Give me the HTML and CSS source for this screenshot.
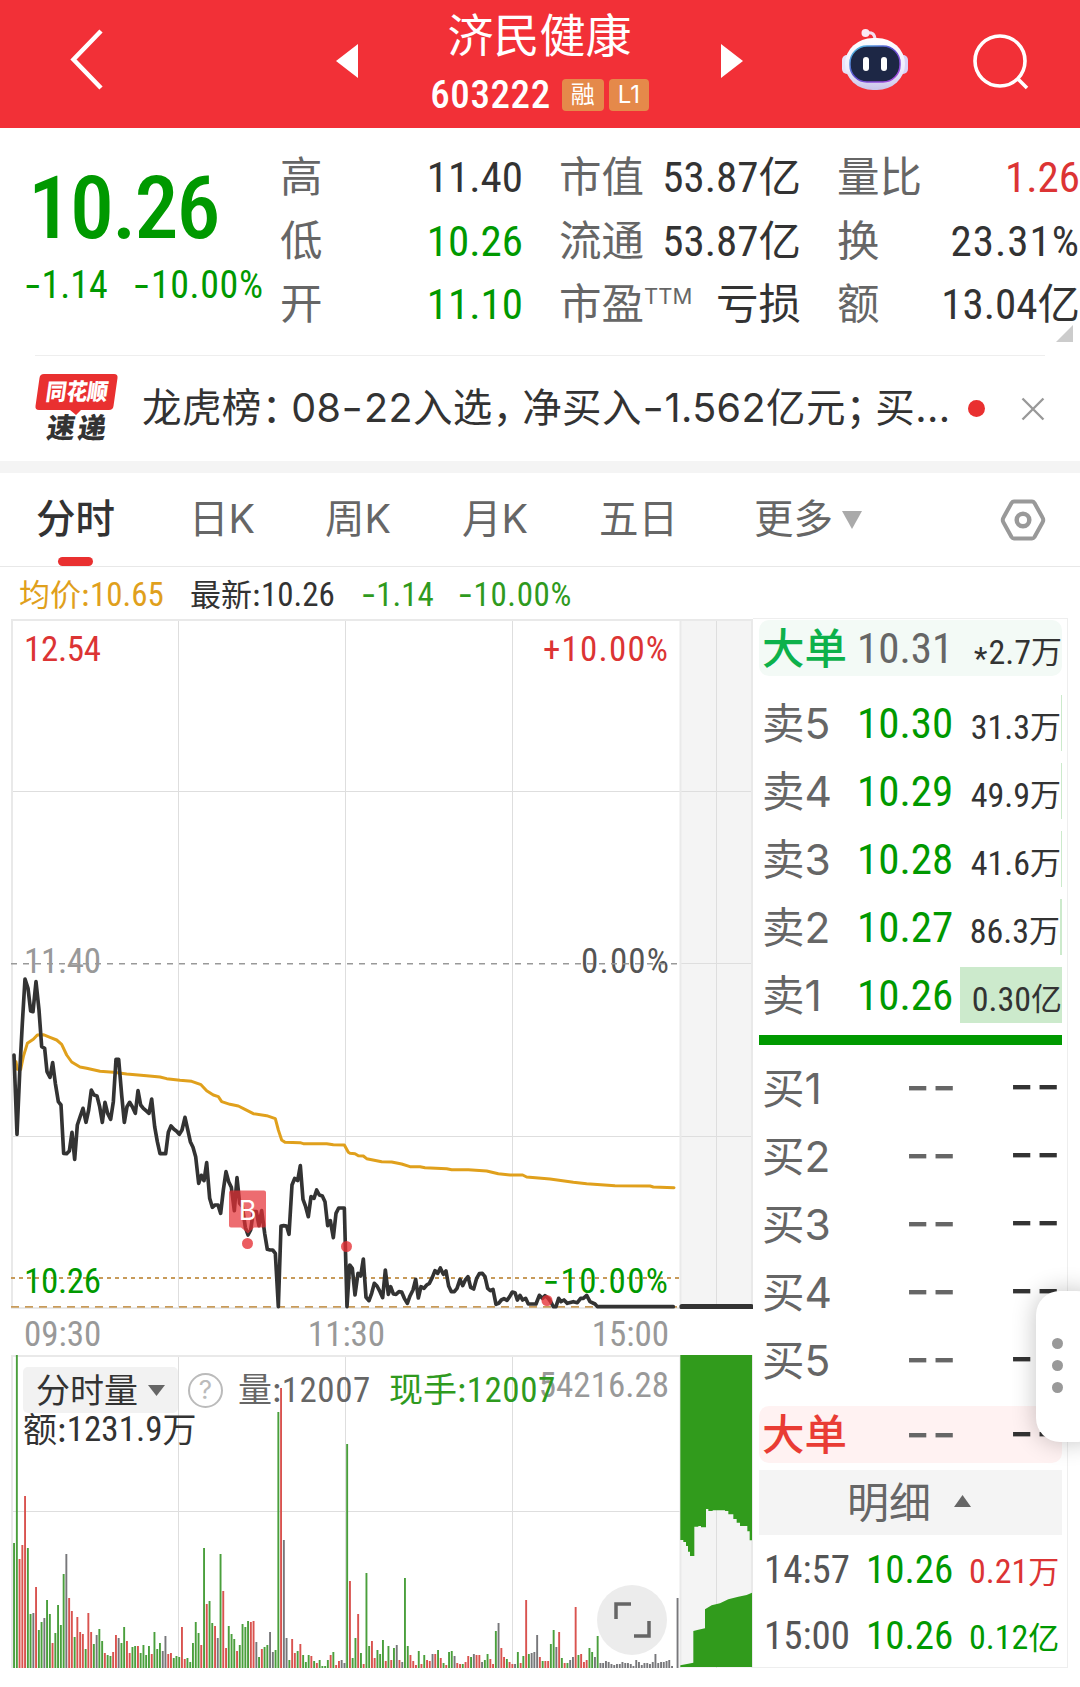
FILE: index.html
```html
<!DOCTYPE html>
<html lang="zh-CN">
<head>
    <meta charset="UTF-8">
    <title>济民健康 603222</title>
    <meta name="viewport" content="width=1080">
    <link rel="stylesheet" href="styles.css">
</head>
<body>
<div class="wrap">
    <header class="header">
        <svg class="back" width="44" height="64" viewBox="0 0 44 64"><path d="M36 3 8.500 31.500 36 60" fill="none" stroke="#fff" stroke-width="4.500"/></svg>
        <i class="prev"></i>
        <div class="title">
            <h1>济民健康</h1>
            <p><b>603222</b><em>融</em><em class="l1">L1</em></p>
        </div>
        <i class="next"></i>
        <svg class="robot" width="66" height="64" viewBox="0 0 66 64">
            <defs>
                <linearGradient id="shell" x1="0" y1="0" x2="0" y2="1"><stop offset="0" stop-color="#fff"/><stop offset=".6" stop-color="#eeecfb"/><stop offset="1" stop-color="#c9c4ea"/></linearGradient>
                <linearGradient id="ring" x1="0" y1="0" x2="1" y2="1"><stop offset="0" stop-color="#4fd0e6"/><stop offset=".45" stop-color="#5b4fd0"/><stop offset="1" stop-color="#b14be0"/></linearGradient>
            </defs>
            <path d="M24 5q9-2 9 7" fill="none" stroke="#f3dff0" stroke-width="3"/>
            <circle cx="23.500" cy="5" r="4" fill="#fbe9f4"/>
            <rect y="27" width="10" height="19" rx="5" fill="#e6e2fa"/>
            <rect x="56" y="27" width="10" height="19" rx="5" fill="#d9d2f7"/>
            <rect x="3" y="10" width="60" height="52" rx="28" fill="url(#shell)"/>
            <rect x="8" y="18" width="50" height="36" rx="17" fill="#1d2745" stroke="url(#ring)" stroke-width="1.500"/>
            <rect x="21" y="29" width="6" height="14" rx="3" fill="#fff"/>
            <rect x="39" y="29" width="6" height="14" rx="3" fill="#fff"/>
        </svg>
        <svg class="search" width="60" height="60" viewBox="0 0 60 60" fill="none" stroke="#fff" stroke-width="3.600"><circle cx="28" cy="29" r="25"/><path d="M45.500 46.500 55 56"/></svg>
    </header>

    <section class="quote">
        <div class="price">
            <b class="big">10.26</b>
            <p><b><i>-</i>1.14</b><b class="rate"><i>-</i>10.00%</b></p>
        </div>
        <ul class="c1">
            <li>高<span><b>11.40</b></span></li>
            <li>低<span class="green"><b>10.26</b></span></li>
            <li>开<span class="green"><b>11.10</b></span></li>
        </ul>
        <ul class="c2">
            <li>市值<span><b>53.87</b>亿</span></li>
            <li>流通<span><b>53.87</b>亿</span></li>
            <li>市盈<sup>TTM</sup><span>亏损</span></li>
        </ul>
        <ul class="c3">
            <li>量比<span class="red"><b>1.26</b></span></li>
            <li>换<span><b class="rate">23.31%</b></span></li>
            <li>额<span><b>13.04</b>亿</span></li>
        </ul>
        <i class="corner"></i>
    </section>

    <section class="news">
        <svg class="logo" width="84" height="72" viewBox="0 0 84 72">
            <path d="M9 2h70q4 0 3.500 4l-4 28q-.5 4-4.500 4H46l-5 5-6-5H4q-4 0-3.500-4L4.500 6Q5 2 9 2z" fill="#e93030"/>
            <g font-family="Noto Sans CJK SC" font-weight="900" transform="skewX(-8)">
                <text x="14" y="28.500" font-size="23" fill="#fff" textLength="62" lengthAdjust="spacingAndGlyphs">同花顺</text>
                <text x="20" y="66.500" font-size="28" fill="#333" textLength="59">速递</text>
            </g>
        </svg>
        <p>龙虎榜<s>：</s>08<i>-</i>22入选<s>，</s>净买入<i>-</i>1.562亿元<s>；</s>买...</p>
        <em class="dot"></em>
        <svg class="close" width="24" height="24" viewBox="0 0 24 24"><path d="M1.500 1.500l21 21M22.500 1.500l-21 21" stroke="#999" stroke-width="2.400"/></svg>
    </section>

    <nav class="tabs">
        <a class="on">分时</a><a>日K</a><a>周K</a><a>月K</a><a>五日</a><a class="more">更多</a>
        <svg width="46" height="46" viewBox="0 0 46 46" fill="none" stroke="#999"><path d="M14 4.500h18q1.500 0 2.500 1.500l8 14.500q1.500 2.500 0 5l-8 14.500q-1 1.500-2.500 1.500h-18q-1.500 0-2.500-1.500l-8-14.500q-1.500-2.500 0-5l8-14.500Q12.500 4.500 14 4.500z" stroke-width="4"/><circle cx="23" cy="23" r="6.300" stroke-width="4.500"/></svg>
    </nav>

    <main class="main">
        <div class="left">
            <div class="legend"><span class="avg">均价:<b>10.65</b></span><span>最新:<b>10.26</b></span><b class="down"><i>-</i>1.14</b><b class="down rate"><i>-</i>10.00%</b></div>

            <svg class="chart" width="753" height="690" viewBox="0 0 753 690">
                <rect x="681" y="1" width="71" height="689" fill="#f4f4f4"/>
                <path class="grid" d="M178.500 1v688M345.500 1v688M512.500 1v688M716.500 1v688M12 172.500h740M12 517.500h740M681 344.500h71"/>
                <path class="frame" d="M12 690V1h740v689M680.500 1v688M12 689h669"/>
                <text class="t" x="24" y="354" textLength="77" fill="#999">11.40</text>
                <text class="t" x="581" y="354" textLength="88" fill="#555">0.00%</text>
                <path d="M11 344.700h668" stroke="#999" stroke-width="1.600" stroke-dasharray="6 6"/>
                <path d="M11 659h668" stroke="#c89b5a" stroke-width="1.800" stroke-dasharray="4 4"/>
                <path d="M11 687.800h668" stroke="#c89b5a" stroke-width="1.800" stroke-dasharray="8 6"/>
                <g transform="translate(0,321) scale(.33333)" fill="none" stroke-linejoin="round" stroke-linecap="round">
                    <path d="M48 365L52 388 62 388 70 350 82 310 100 298 112 285 130 284 150 292 170 300 185 313 200 345 215 366 240 381 260 385 300 394 340 397 380 402 440 407 480 411 500 416 540 421 575 424 603 434 620 452 640 465 655 470 665 485 690 493 715 498 735 508 760 521 800 527 826 536 835 570 845 600 855 607 900 608 910 611 980 611 1000 614 1033 615 1045 637 1050 640 1065 641 1075 647 1090 648 1100 656 1145 665 1175 666 1205 672 1230 680 1260 680 1275 683 1340 686 1355 689 1405 689 1460 693 1495 701 1530 705 1568 705 1580 711 1650 717 1720 727 1760 731 1845 737 1950 738 1960 741 2022 743" stroke="#e0a01c" stroke-width="9"/>
                    <path d="M42 345L51 583 59 400 67 250 75 117 84 145 92 213 99 215 108 125 117 210 125 320 134 325 141 395 150 412 158 368 166 430 175 485 183 495 191 640 200 641 208 633 216 577 224 658 232 555 241 528 249 505 258 547 266 510 274 450 282 465 291 468 299 500 307 547 315 487 323 520 332 538 340 485 348 358 356 358 365 465 373 547 381 500 389 487 397 500 406 520 414 452 422 495 430 505 438 512 447 520 455 477 464 560 472 605 480 641 497 641 505 577 513 558 522 568 530 574 538 583 546 570 555 532 563 568 571 605 579 622 587 650 596 730 604 706 612 722 620 668 629 775 637 802 645 795 654 795 662 820 670 750 678 695 686 725 694 742 703 812 711 713 719 790 727 800 736 862 744 885 752 870 760 815 769 815 777 857 785 812 794 880 802 928 810 930 818 930 826 940 835 1100 843 858 851 857 860 858 867 883 876 735 884 715 893 722 901 677 909 778 917 800 925 830 933 770 942 775 950 750 958 765 967 768 975 785 983 857 991 842 1000 893 1008 820 1016 804 1033 804 1041 1100 1049 975 1057 985 1065 1065 1074 1000 1082 1008 1090 957 1098 1072 1107 1082 1115 1060 1123 1030 1131 1038 1140 1055 1148 1073 1156 990 1165 1063 1172 1040 1180 1062 1188 1063 1197 1055 1205 1056 1213 1075 1222 1090 1230 1068 1239 1050 1247 1018 1255 1074 1263 1040 1272 1045 1280 1035 1288 1030 1297 1012 1305 992 1313 1000 1321 984 1330 1003 1338 993 1346 1038 1354 1055 1363 1055 1371 1045 1380 1018 1388 1037 1396 1020 1404 1010 1412 1042 1421 1047 1430 1015 1438 1001 1447 1000 1455 1010 1463 1045 1471 1052 1479 1048 1488 1093 1496 1090 1504 1080 1512 1076 1521 1081 1529 1070 1537 1056 1545 1058 1552 1080 1560 1066 1568 1080 1577 1075 1585 1092 1608 1092 1618 1066 1628 1075 1635 1067 1645 1075 1652 1085 1660 1100 1668 1100 1676 1075 1683 1085 1692 1080 1702 1090 1720 1085 1732 1088 1742 1075 1750 1075 1760 1066 1770 1085 1785 1092 1792 1100 2020 1100" stroke="#333" stroke-width="11"/>
                    <path d="M2046 1100H2254" stroke="#333" stroke-width="16"/>
                </g>
                <g fill="#e62e33" fill-opacity=".78">
                    <path d="M231 571.500h33q2 0 2 2v33q0 2-2 2h-10l-6 6-7-6h-10q-2 0-2-2v-33q0-2 2-2z" fill-opacity=".7"/>
                    <circle cx="247.500" cy="624.500" r="5.500"/><circle cx="346.500" cy="627.500" r="5.500"/><circle cx="547" cy="681.500" r="5.500"/>
                </g>
                <text x="247.500" y="601" class="mark">B</text>
                <text class="t" x="24" y="42" textLength="77" fill="#dc3434">12.54</text>
                <text class="t" x="543" y="42" textLength="125" fill="#dc3434">+10.00%</text>
                <text class="t" x="24" y="674" textLength="77" fill="#090">10.26</text>
                <text class="t" x="543" y="674" textLength="125" fill="#090"><tspan font-family="Inter">-</tspan>10.00%</text>
            </svg>

            <div class="axis"><b>09:30</b><b>11:30</b><b>15:00</b></div>

            <div class="volume">
                <svg width="753" height="315" viewBox="0 0 753 315">
                    <rect x="681" y="1" width="71" height="312" fill="#f4f4f4"/>
                    <path class="grid" d="M178.500 1v312M345.500 1v312M512.500 1v312M716.500 1v312M12 156.500h668"/>
                    <path class="frame" d="M12 313V1h740v312M680.500 1v312"/>
                    <g id="bars"></g>
                    <g transform="translate(340,-15) scale(.33333)" fill="#319b1c">
                        <path d="M1021 45V600H1030V606H1038V618H1044V635H1050V648H1063V560H1075V558H1083V562H1098V507H1105V513H1118V511H1155V513H1165V523H1180V537H1190V548H1200V558H1222V574H1229V601H1236V45z"/>
                        <path d="M1021 976L1045 971 1060 968V873L1075 869 1095 865V808L1115 796 1140 790 1165 778 1195 770 1220 765 1236 758V981H1021z"/>
                    </g>
                    <circle cx="632" cy="265" r="35" fill="#ececec"/>
                    <path d="M616 264v-15h15M649 266v15h-15" fill="none" stroke="#666" stroke-width="3.500"/>
                </svg>
                <div class="info">
                    <p><span class="chip">分时量</span><span class="help">?</span><span class="vol">量:<b>12007</b></span><span class="now">现手:<b>12007</b></span></p>
                    <p>额:<b>1231.9</b>万</p>
                </div>
                <b class="max">54216.28</b>
            </div>
        </div>

        <aside class="book">
            <div class="row sell"><span>大单</span><b>10.31</b><em><b><i>*</i>2.7</b>万</em></div>
            <ul class="asks">
                <li class="row"><span>卖5</span><b>10.30</b><em><b>31.3</b>万</em></li>
                <li class="row"><span>卖4</span><b>10.29</b><em><b>49.9</b>万</em></li>
                <li class="row"><span>卖3</span><b>10.28</b><em><b>41.6</b>万</em></li>
                <li class="row"><span>卖2</span><b>10.27</b><em class="w2"><b>86.3</b>万</em></li>
                <li class="row"><span>卖1</span><b>10.26</b><em class="full"><b>0.30</b>亿</em></li>
            </ul>
            <ul class="bids">
                <li class="row"><span>买1</span><b>--</b><em>--</em></li>
                <li class="row"><span>买2</span><b>--</b><em>--</em></li>
                <li class="row"><span>买3</span><b>--</b><em>--</em></li>
                <li class="row"><span>买4</span><b>--</b><em>--</em></li>
                <li class="row"><span>买5</span><b>--</b><em>--</em></li>
            </ul>
            <div class="row buy"><span>大单</span><b>--</b><em>--</em></div>
            <div class="detail">明细</div>
            <ul class="ticks">
                <li><b>14:57</b><b class="p">10.26</b><em class="red"><b>0.21</b>万</em></li>
                <li><b>15:00</b><b class="p">10.26</b><em class="green"><b>0.12</b>亿</em></li>
            </ul>
        </aside>
    </main>

    <div class="handle"><i></i><i></i><i></i></div>
</div>
<script>
    (function(){
        // 分时量: 颜色 + 高度
        var data = 'g125 g313 r109 r123 r172 g120 g54 k55 r81 g38 g46 k50 g68 g54 r25 g35 g63 g43 g94 k114 r70 r57 g31 r51 r36 r34 g19 r55 r36 g24 k33 g39 g27 r15 g13 g12 r16 r33 k30 g25 g41 r27 r15 g21 g22 r22 g15 g23 g13 g22 r14 g36 g19 g25 k17 k32 r14 r15 g10 g12 g11 r41 r9 g10 g6 g25 g46 g35 r23 g120 r64 g67 g45 r42 k30 g114 r77 r20 g42 g34 g29 r17 g23 g44 g41 g47 r46 r47 k26 g11 r19 g21 g23 k36 k16 g18 g256 r280 k128 k30 g8 r29 r15 g17 r24 g13 g6 g13 r12 g7 r5 g8 g2 g2 g8 r13 g16 r3 r7 k8 k5 g224 r87 g10 g30 r54 g15 r4 g95 g22 r27 r10 g18 g14 g28 r7 g22 r8 g20 k23 r8 k6 g90 g22 r13 r7 r3 g17 r4 g13 r8 r7 k14 r14 g18 r10 g5 r3 g16 g17 k12 r5 r4 g4 r6 r12 g11 k14 r13 r13 k6 g8 g14 r9 r4 g37 k45 r20 r11 g9 r6 r4 k4 g16 r5 g12 r68 g14 k15 k16 k33 r11 g7 r7 r7 g24 g38 k21 r36 g10 r5 g5 k8 k11 r61 g13 r14 r6 r8 g20 g16 k11 g32 k5 k5 k7 k6 k4 k3 k4 k4 k6 k5 k5 k4 k2 k8 k6 k3 k5 k5 k4 k6 k14 k5 k6 k6 k7 k8 k2 k0 k70'.split(' ');
        var color = {g: '#4a9f3c', r: '#d9534f', k: '#77777a'};
        var html = '';
        for(var i = 0; i < data.length; i++){
            var h = +data[i].slice(1);
            html += '<rect x="' + (13.1 + i * 2.753).toFixed(1) + '" y="' + (313 - h) + '" width="1.9" height="' + h + '" fill="' + color[data[i].charAt(0)] + '"/>';
        }
        document.querySelector('#bars').innerHTML = html;
    }());
</script>
</body>
</html>
```
FILE: styles.css
```css
*{margin:0;padding:0;box-sizing:border-box;}
body{background:#fff;color:#333;font-family:Inter,"Noto Sans CJK SC",sans-serif;}
ul,li{list-style:none;}
i,em{font-style:normal;}
s{text-decoration:none;letter-spacing:-10px;}
svg{display:block;}
b,.t{font-family:Roboto,sans-serif;font-weight:440;font-stretch:80%;}
b i{font-family:Inter;}
.rate{letter-spacing:.6px;}
.red{color:#dc3434;}
.green{color:#090;}
.wrap{position:relative;width:1080px;height:1687px;overflow:hidden;}

.header{display:flex;height:128px;background:#f23037;}
.back{margin:28px 0 0 65px;}
.prev,.next{width:22px;height:34px;margin-top:44px;background:#fff;}
.prev{margin-left:227px;clip-path:polygon(100% 0,100% 100%,0 50%);}
.next{clip-path:polygon(0 0,100% 50%,0 100%);}
.title{width:363px;color:#fff;text-align:center;}
.title h1{font-size:46px;font-weight:400;line-height:46px;height:46px;margin-top:12px;}
.title p{display:flex;justify-content:center;align-items:center;height:40px;margin-top:17px;line-height:40px;}
.title p b{font-size:39px;font-weight:500;letter-spacing:.6px;margin-right:11px;}
.title em{width:42px;height:32px;margin-right:5px;border-radius:4px;background:#e5894a;font-size:24px;line-height:31px;}
.title em.l1{width:40px;margin-right:0;}
.robot{margin:28px 0 0 99px;}
.search{margin:32px 0 0 64px;}

.quote{position:relative;display:flex;height:228px;padding-top:17px;}
.quote:after{content:"";position:absolute;left:35px;right:35px;bottom:0;height:1px;background:#eee;}
.price{width:280px;color:#090;}
.price .big{display:block;margin:12px 0 0 28px;font-size:88px;font-weight:500;line-height:102px;letter-spacing:-2px;}
.price p{display:flex;gap:25px;padding-left:24px;margin-top:3px;font-size:38px;line-height:44px;white-space:nowrap;}
.quote li{display:flex;height:63.5px;color:#666;font-size:42.5px;line-height:63px;white-space:nowrap;}
.quote li span{margin-left:auto;color:#333;}
.quote li .green{color:#090;}
.quote li .red{color:#dc3434;}
.quote li b{font-size:43px;}
.quote li .rate{letter-spacing:1px;}
.c1{width:243px;}
.c2{width:242px;margin-left:36px;}
.c3{width:243px;margin-left:36px;}
sup{font-size:22px;line-height:48px;}
.corner{position:absolute;right:7px;bottom:14px;width:17px;height:17px;background:#ccc;clip-path:polygon(100% 0,100% 100%,0 100%);}

.news{display:flex;align-items:center;height:117px;padding:0 35px;border-bottom:12px solid #f4f4f4;}
.logo{margin-top:-2px;overflow:visible;}
.news p{width:814px;margin-left:23px;font-size:39.5px;line-height:61px;letter-spacing:.4px;white-space:nowrap;}
.news p i{display:inline-block;margin:0 2px;transform:scaleX(1.2);}
.dot{width:17px;height:17px;margin-left:14px;border-radius:50%;background:#e93030;}
.close{margin-left:36px;}

.tabs{display:flex;align-items:center;height:94px;padding-left:36px;border-bottom:1px solid #e8e8e8;color:#666;font-size:39.5px;}
.tabs a{position:relative;width:137px;line-height:93px;}
.tabs a:nth-child(1){width:153px;}
.tabs a:nth-child(2){width:136px;}
.tabs a:nth-child(5){width:155px;}
.tabs a.on{color:#333;font-weight:500;}
.tabs a.on:after{content:"";position:absolute;left:22px;bottom:0;width:35px;height:9px;border-radius:5px;background:#e93030;}
.tabs .more{width:246px;}
.more:after{content:"";display:inline-block;margin-left:9px;width:20px;height:18px;background:#aaa;clip-path:polygon(0 0,100% 0,50% 100%);vertical-align:4px;}

.main{display:flex;}
.left{width:753px;}
.legend{display:flex;height:52px;padding-left:19px;font-size:31px;line-height:55px;}
.legend b{font-size:33px;}
.legend span{width:171px;}
.legend .avg{color:#e0a01c;}
.legend .down{margin-right:24px;color:#2f9a1e;}
.grid{fill:none;stroke:#dedede;stroke-width:1;}
.frame{fill:none;stroke:#e9e9e9;stroke-width:2;}
.t{font-size:35px;}
.mark{font-size:27px;fill:#fff;text-anchor:middle;}
.axis{display:flex;justify-content:space-between;height:46px;padding:0 84px 0 24px;color:#999;font-size:35px;line-height:51px;}
.volume{position:relative;height:315px;}
.info{position:absolute;left:23px;top:12px;font-size:34px;}
.info p{display:flex;align-items:center;height:46px;white-space:nowrap;line-height:46px;}
.info p+p{height:34px;line-height:34px;}
.info b{font-size:35px;}
.chip{width:155px;height:46px;padding-left:13px;border-radius:5px;background:#f2f2f2;line-height:47px;}
.chip:after{content:"";display:inline-block;width:17px;height:11px;margin-left:10px;background:#666;clip-path:polygon(0 0,100% 0,50% 100%);vertical-align:7px;}
.help{width:35px;height:35px;margin:0 15px 0 10px;border:2.500px solid #bbb;border-radius:50%;color:#bbb;font-size:26px;line-height:30px;text-align:center;}
.vol{width:151px;color:#666;}
.vol b,.now b{letter-spacing:.5px;}
.now{color:#2f9a1e;}
.max{position:absolute;right:84px;top:11px;color:#999;font-size:35px;line-height:40px;z-index:-1;}

.book{width:315px;height:1050px;margin-top:51px;padding:1px 5px 0 6px;border:1px solid #eee;border-left:0;}
.row{display:flex;align-items:center;height:56px;margin-bottom:12px;padding-left:3px;color:#666;font-size:42.5px;line-height:57px;}
.row span{width:95px;}
.row>b{width:103px;font-size:43px;}
.row em{flex:1;display:flex;justify-content:flex-end;height:56px;color:#333;font-size:31px;line-height:64px;white-space:nowrap;}
.row em b{font-size:34px;}
.row em i{font-family:Roboto;font-size:31px;vertical-align:-5px;margin-right:1px;}
.sell,.buy{border-radius:10px;}
.sell{margin-bottom:19px;background:#f3faf6;}
.sell span{color:#0db14b;font-weight:500;}
.buy{height:57px;margin:18px 0 7px;background:#fff2f2;}
.buy span{color:#e93c34;font-weight:500;}
.asks{border-bottom:10px solid #090;}
.asks .row>b{color:#090;}
.asks em{border-right:1px solid #cceacc;}
.asks em.w2{border-right-width:2px;}
.asks em.full{border:0;background:#cceacc;}
.bids{padding-top:15px;}
.bids .row>b,.bids em,.buy>b,.buy em{font-family:Inter;font-size:54px;font-stretch:100%;font-weight:400;line-height:50px;letter-spacing:1.500px;text-align:right;}
.bids .row>b,.buy>b{width:101px;padding-bottom:4px;}
.detail{height:65px;background:#f4f4f4;color:#666;font-size:42px;line-height:65px;padding-left:88px;}
.detail:after{content:"";display:inline-block;width:17px;height:12px;margin-left:23px;background:#666;clip-path:polygon(50% 0,100% 100%,0 100%);vertical-align:11px;}
.ticks li{display:flex;height:66px;padding-left:5px;color:#555;font-size:39px;line-height:70px;}
.ticks b:first-child{width:102px;}
.ticks .p{width:103px;color:#090;}
.ticks em{font-size:31px;line-height:72px;white-space:nowrap;}
.ticks em b:first-child{font-size:34px;}

.handle{position:absolute;right:-20px;top:1291px;width:64px;height:151px;padding:47px 0 0 16px;border-radius:24px;background:#fff;box-shadow:0 0 24px rgba(0,0,0,.24);}
.handle i{display:block;width:11px;height:11px;margin-bottom:11px;border-radius:50%;background:#999;}
```
